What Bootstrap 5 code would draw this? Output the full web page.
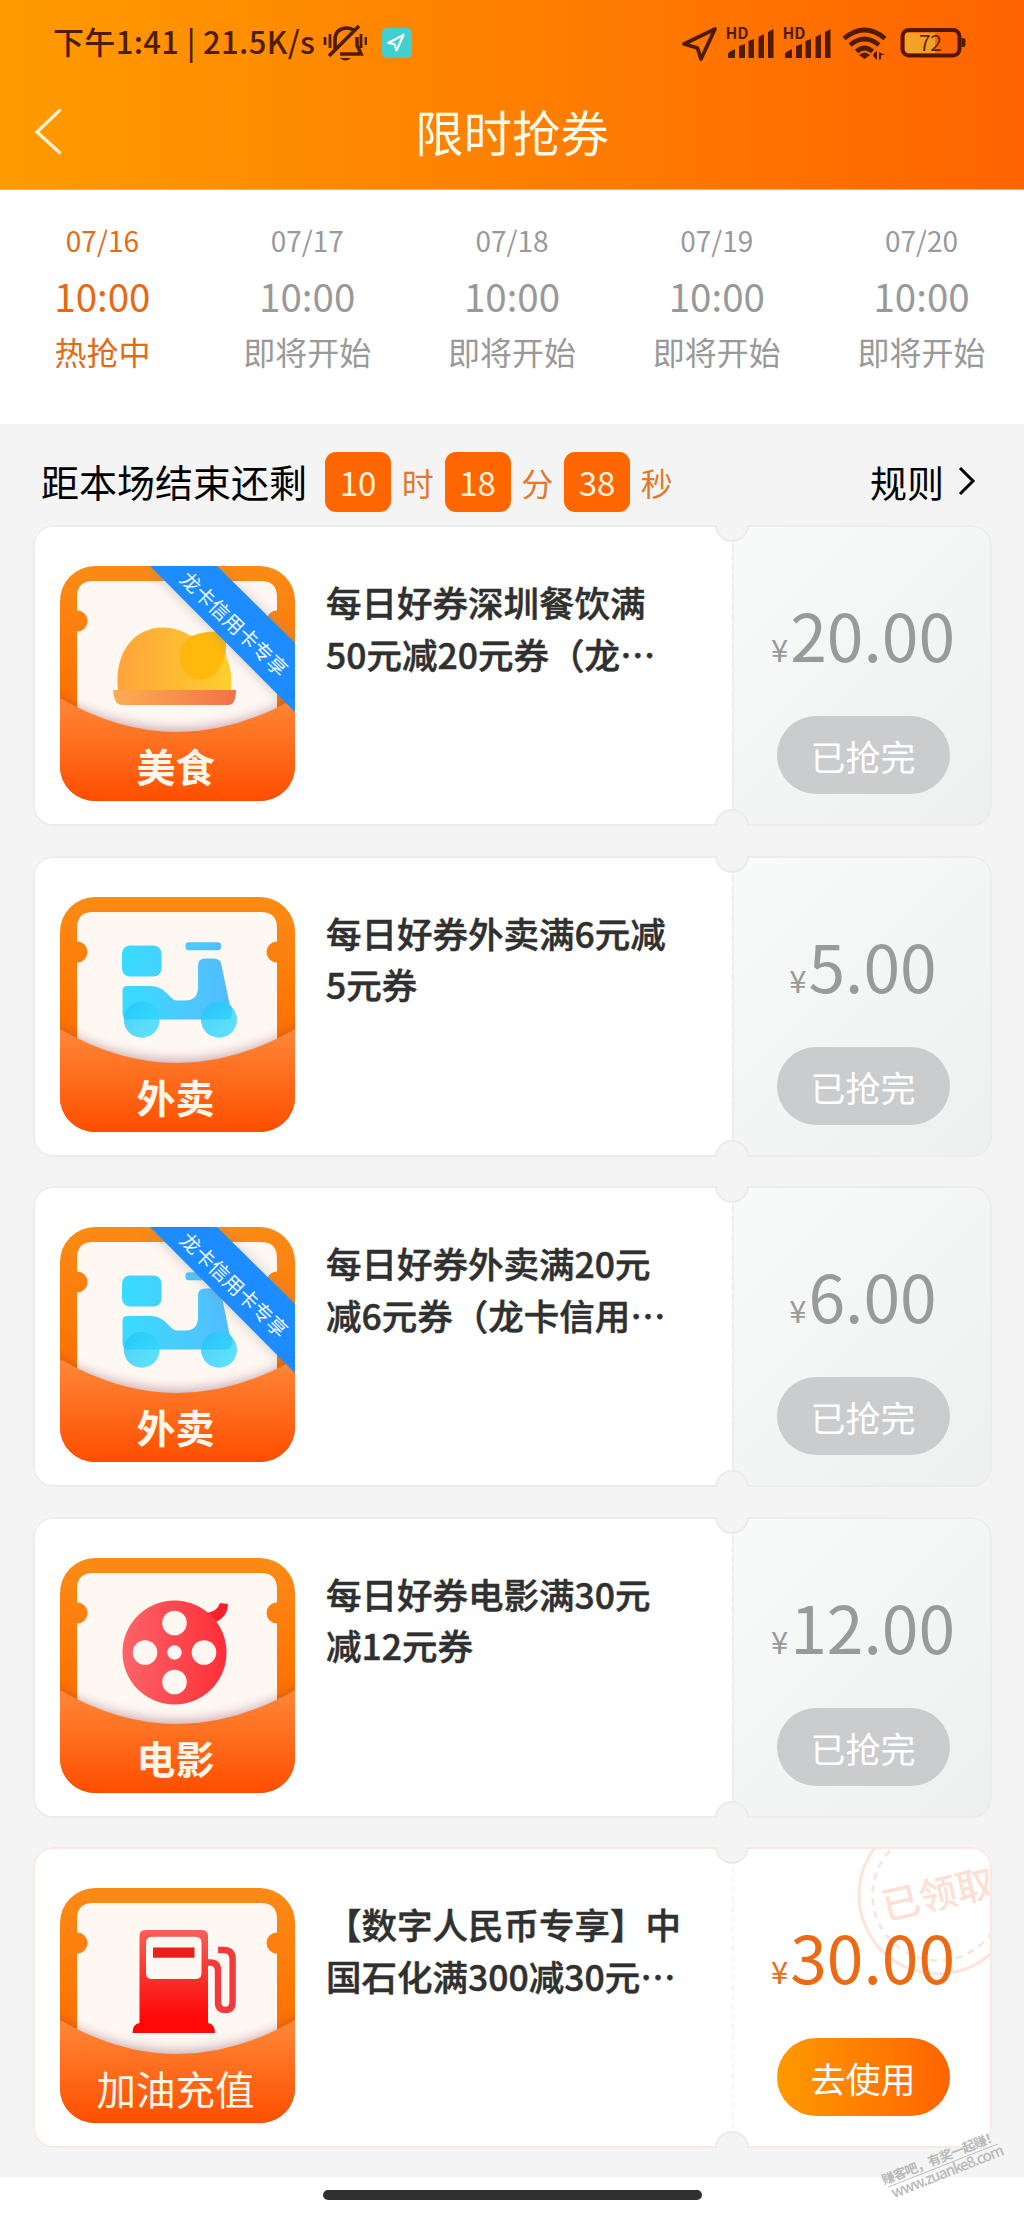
<!DOCTYPE html>
<html lang="zh-CN">
<head>
<meta charset="utf-8">
<meta name="viewport" content="width=device-width, initial-scale=1">
<title>限时抢券</title>
<link href="https://cdn.jsdelivr.net/npm/bootstrap@5.3.0/dist/css/bootstrap.min.css" rel="stylesheet">
<style>
body{font-family:"Noto Sans CJK SC","Noto Sans",sans-serif;background:#fff;width:1024px;color:#000;overflow-x:hidden}
svg{display:block;flex:none}
svg text{font-family:"Noto Sans CJK SC",sans-serif}
.top-area{height:190px;background:linear-gradient(90deg,#ff9b00,#ff6400);border-bottom:1px solid #f3b45e}
.status-row{height:85px;padding:0 58px 0 53px;color:#4f1c00}
.status-text{font-size:31px;font-weight:500;line-height:40px;letter-spacing:.35px;white-space:nowrap;margin-top:-3px}
.title-row{height:92px;color:#fffbe8;padding:0 34px}
.title-row h1{font-size:48.5px;font-weight:400;line-height:60px}
.sessions{height:234px;padding-top:29px;color:#999}
.sessions .on{color:#e66a14}
.s-date{font-size:28px;line-height:43px}
.s-time{font-size:38.5px;line-height:66px}
.s-state{font-size:32px;line-height:46px}
.list-area{background:#f4f4f4;height:1753px;padding:0 32px 0 33px}
.count-row{height:101px;padding:28px 16px 13px 8px}
.count-label{font-size:38px;line-height:58px;width:284px;white-space:nowrap}
.num-box{width:66px;height:60px;border-radius:11px;background:#ff6600;color:#fff3df;font-size:33px;line-height:61px;text-align:center}
.unit{font-size:32px;line-height:61px;color:#e07a30;width:53.5px;text-align:center}
.rules{font-size:37px;line-height:60px}
.coupon{height:301px;margin-bottom:29.6px;border-radius:20px;background:#fff;position:relative;overflow:hidden}
.coupon::before{content:"";position:absolute;inset:0;border:2px solid #ececec;border-radius:20px;z-index:1}
.coupon.live::before{border-color:#fbe8e0}
.notch{position:absolute;left:682px;width:34px;height:34px;border-radius:50%;background:#f4f4f4;border:2px solid #ebebeb;z-index:2}
.notch.up{top:-17px}.notch.down{bottom:-17px}
.main-side{width:699px;padding:41px 0 0 27px}
.c-title{font-size:35.5px;font-weight:500;line-height:51.5px;color:#303030;margin:10px 0 0 31px;white-space:nowrap;-webkit-text-stroke:.5px #303030}
.price-side{flex:1;background:linear-gradient(135deg,#f9fafa,#eef0f0);border-left:2px dashed #ececec;color:#999b9a;position:relative}
.live .price-side{background:none;color:#ec6a14;border-left-color:#f6f6f6}
.price{height:80px;line-height:80px;margin-top:68px;font-size:66px;position:relative;white-space:nowrap}
.price span{font-size:31px;margin-right:2px}
.act{width:173px;height:78px;border-radius:39px;background:#cbccce;color:#fff;font-size:35px;line-height:80px;text-align:center;margin-top:43px;position:relative}
.live .act{background:linear-gradient(90deg,#ff9900,#ff6400)}
.stamp{position:absolute;left:122px;top:-34px}
.foot-bar{height:42px;padding-top:13px}
.foot-bar div{width:379px;height:10px;border-radius:5px;background:#303030}
.wmark{position:absolute;left:873px;top:2117px;z-index:3}
</style>
<script src="https://cdn.jsdelivr.net/npm/bootstrap@5.3.0/dist/js/bootstrap.bundle.min.js"></script>
</head>
<body>
<svg width="0" height="0" class="position-absolute">
<defs>
<linearGradient id="gFrame" x1="0" y1="0" x2="0" y2="1"><stop offset="0" stop-color="#fb8b16"/><stop offset=".6" stop-color="#fe7000"/></linearGradient>
<linearGradient id="gEnv" x1="0" y1="0" x2="0" y2="1"><stop offset="0" stop-color="#ff8838"/><stop offset="1" stop-color="#ff4e00"/></linearGradient>
<linearGradient id="gBike" gradientUnits="userSpaceOnUse" x1="62" y1="0" x2="178" y2="0"><stop offset="0" stop-color="#38dcff"/><stop offset=".7" stop-color="#50c4ff"/><stop offset="1" stop-color="#50b8ff"/></linearGradient>
<linearGradient id="gWheel" x1="0" y1="0" x2="1" y2="1"><stop offset="0" stop-color="#26c4f8"/><stop offset="1" stop-color="#36e0ff"/></linearGradient>
<linearGradient id="gReel" x1="0" y1="0" x2="1" y2="0"><stop offset="0" stop-color="#fb6468"/><stop offset="1" stop-color="#ff2e38"/></linearGradient>
<linearGradient id="gPump" gradientUnits="userSpaceOnUse" x1="0" y1="42" x2="0" y2="145"><stop offset="0" stop-color="#f66058"/><stop offset=".85" stop-color="#ff0808"/></linearGradient>
<linearGradient id="gDome" x1="0" y1="0" x2="1" y2="0"><stop offset="0" stop-color="#ffa43c"/><stop offset="1" stop-color="#ffcf2c"/></linearGradient>
<linearGradient id="gBase" x1="0" y1="0" x2="1" y2="0"><stop offset="0" stop-color="#fbae52"/><stop offset="1" stop-color="#f4714a"/></linearGradient>
<clipPath id="cIcon"><rect width="235" height="235" rx="35"/></clipPath>
<filter id="soft" x="-20%" y="-20%" width="140%" height="140%"><feGaussianBlur stdDeviation="6"/></filter>
<symbol id="frame" viewBox="0 0 235 235">
<g clip-path="url(#cIcon)">
<rect width="235" height="235" fill="url(#gFrame)"/>
<path d="M17 175V65.500a10.500 10.500 0 0 0 0-21V31Q17 15 33 15H201Q217 15 217 31V44.500a10.500 10.500 0 0 0 0 21V175z" fill="#fff7f1"/>
</g></symbol>
<symbol id="pocket" viewBox="0 0 235 235">
<g clip-path="url(#cIcon)">
<path d="M-20 122Q117.500 204 255 122V240H-20z" fill="#6b2a48" opacity=".38" filter="url(#soft)"/>
<path d="M0 132Q117.500 200 235 132V235H0z" fill="url(#gEnv)"/>
</g></symbol>
<symbol id="ribbon" viewBox="0 0 235 235">
<g clip-path="url(#cIcon)">
<path d="M87 0L240 153V80L157 0z" fill="#888" opacity=".35" filter="url(#soft)"/>
<path d="M90 0H157L235 77V146z" fill="#1d8cff"/>
<text transform="translate(174 58) rotate(44)" text-anchor="middle" y="7.500" font-size="20" fill="#f2f7ff">龙卡信用卡专享</text>
</g></symbol>
<symbol id="bike" viewBox="0 0 235 235">
<g fill="url(#gBike)"><rect x="62" y="48.500" width="39.500" height="31" rx="8"/><rect x="125.500" y="45.300" width="35.500" height="8" rx="3"/>
<path d="M62.500 94q0-5 5-5H90C106 89 110 103.500 117 103.500H125Q138 103.500 138 90V68q0-6.500 7-6.500h9q6.500 0 7.500 6.500l8 39q5 5 2 11.500-1 4-6 4H68q-5 0-5.500-6z"/></g>
<g fill="url(#gWheel)" opacity=".8"><circle cx="81.700" cy="122.700" r="18"/><circle cx="159" cy="122.700" r="18"/></g>
</symbol>
</defs>
</svg>

<header class="top-area">
<div class="status-row d-flex align-items-center">
<span class="status-text">下午1:41 | 21.5K/s</span>
<svg class="ms-2" width="44" height="40" viewBox="0 0 44 40" fill="none" stroke="#4f1c00" stroke-width="3.600"><path d="M12 26V17q0-11 11-12 4 0 8 2M34 14v8l4 9H17"/><path d="M36 3L6 33" stroke-width="3.800"/><path d="M2 14v8M7 11v14M38 11v14M43 14v8" stroke-width="2.800"/><path d="M17 35h11q-5.500 5-11 0z" fill="#4f1c00" stroke="none"/></svg>
<svg style="margin-left:15px" width="30" height="30" viewBox="0 0 30 30"><rect width="30" height="30" rx="5" fill="#42cfd2"/><path d="M6 15L21.500 7 14.500 22.500 12.500 16z" fill="none" stroke="#fff" stroke-width="2.200" stroke-linejoin="round"/></svg>
<svg class="ms-auto" width="285" height="44" viewBox="680 20 285 44" fill="#4f1c00">
<path d="M683 43L714 28 700 58 696.500 47z" fill="none" stroke="#4f1c00" stroke-width="3.800" stroke-linejoin="round"/>
<g id="sig"><text x="724.500" y="38" font-size="15.500" font-weight="700" textLength="23" lengthAdjust="spacingAndGlyphs">HD</text><path d="M727 57v-4q0-2 7-5v9zM738 57V45l6-2v14zM747.500 57V40l5.500-2v19zM757.500 57V36l5.500-3v24zM767 57V31l5.500-3v29z"/></g>
<use href="#sig" x="57"/>
<g fill="none" stroke="#4f1c00" stroke-width="4.600"><path d="M843 37.500q20.500-17 41 0M849 44q14.500-12 29 0M855.500 50.500q8-7 16 0"/></g>
<path d="M858 54q5.500-5 11 0l-5.500 4zM873 52l3-2v9l-4-4zM878 51v8l2-1v-4h4z"/>
<rect x="904" y="32" width="30" height="20" fill="#f3a127"/>
<rect x="901.500" y="29" width="57" height="25.500" rx="6.500" fill="none" stroke="#541800" stroke-width="4"/><path d="M960.500 37h1.500q2.500 0 2.500 2.500v4q0 2.500-2.500 2.500h-1.500z"/>
<text x="918" y="50" font-size="21" textLength="23" fill="#642500">72</text>
</svg>
</div>
<div class="title-row position-relative d-flex align-items-center justify-content-center">
<svg class="position-absolute start-0" style="margin-left:33px" width="30" height="48" viewBox="0 0 30 48"><path d="M26.500 3.500L4 25 26.500 45.500" fill="none" stroke="#fff0cf" stroke-width="3.400" stroke-linecap="round"/></svg>
<h1 class="m-0">限时抢券</h1>
</div>
</header>

<nav class="sessions d-flex text-center">
<div class="col on"><div class="s-date">07/16</div><div class="s-time">10:00</div><div class="s-state">热抢中</div></div>
<div class="col"><div class="s-date">07/17</div><div class="s-time">10:00</div><div class="s-state">即将开始</div></div>
<div class="col"><div class="s-date">07/18</div><div class="s-time">10:00</div><div class="s-state">即将开始</div></div>
<div class="col"><div class="s-date">07/19</div><div class="s-time">10:00</div><div class="s-state">即将开始</div></div>
<div class="col"><div class="s-date">07/20</div><div class="s-time">10:00</div><div class="s-state">即将开始</div></div>
</nav>

<main class="list-area">
<div class="count-row d-flex">
<div class="count-label">距本场结束还剩</div>
<div class="num-box">10</div><div class="unit">时</div><div class="num-box">18</div><div class="unit">分</div><div class="num-box">38</div><div class="unit">秒</div>
<div class="rules ms-auto d-flex align-items-center">规则<svg style="margin-left:13px;margin-top:-3px" width="19" height="32" viewBox="0 0 19 32"><path d="M3 3L16 16 3 29" fill="none" stroke="#000" stroke-width="3"/></svg></div>
</div>

<section class="coupon d-flex">
<i class="notch up"></i><i class="notch down"></i>
<div class="main-side d-flex align-items-start">
<svg width="235" height="235" viewBox="0 0 235 235"><use href="#frame"/>
<path d="M58 124C54 85 75 61.500 103 61.500Q118 61.500 131 70L149 66Q166 64 166 76V90Q173 106 171 124z" fill="url(#gDome)"/><path d="M149 66Q167 64 166 77C165 100 155 113.500 142 113.500C128 113.500 120 103 120 90C120 77 130 67 149 66z" fill="#ffb400" opacity=".75"/>
<path d="M53 124H176Q176 139 168 139H62Q54 139 53 124z" fill="url(#gBase)"/>
<use href="#ribbon"/><use href="#pocket"/><path d="M218 129L235 146V132z" fill="#1d8cff"/>
<text x="115.500" y="216" text-anchor="middle" font-size="39" font-weight="700" fill="#fff6ea">美食</text></svg>
<h2 class="c-title">每日好券深圳餐饮满<br>50元减20元券（龙⋯</h2></div>
<div class="price-side d-flex flex-column align-items-center"><div class="price"><span>¥</span>20.00</div><div class="act">已抢完</div></div>
</section>

<section class="coupon d-flex">
<i class="notch up"></i><i class="notch down"></i>
<div class="main-side d-flex align-items-start">
<svg width="235" height="235" viewBox="0 0 235 235"><use href="#frame"/><use href="#bike"/><use href="#pocket"/>
<text x="115.500" y="216" text-anchor="middle" font-size="39" font-weight="700" fill="#fff6ea">外卖</text></svg>
<h2 class="c-title">每日好券外卖满6元减<br>5元券</h2></div>
<div class="price-side d-flex flex-column align-items-center"><div class="price"><span>¥</span>5.00</div><div class="act">已抢完</div></div>
</section>

<section class="coupon d-flex">
<i class="notch up"></i><i class="notch down"></i>
<div class="main-side d-flex align-items-start">
<svg width="235" height="235" viewBox="0 0 235 235"><use href="#frame"/><use href="#bike"/><use href="#ribbon"/><use href="#pocket"/><path d="M218 129L235 146V132z" fill="#1d8cff"/>
<text x="115.500" y="216" text-anchor="middle" font-size="39" font-weight="700" fill="#fff6ea">外卖</text></svg>
<h2 class="c-title">每日好券外卖满20元<br>减6元券（龙卡信用⋯</h2></div>
<div class="price-side d-flex flex-column align-items-center"><div class="price"><span>¥</span>6.00</div><div class="act">已抢完</div></div>
</section>

<section class="coupon d-flex">
<i class="notch up"></i><i class="notch down"></i>
<div class="main-side d-flex align-items-start">
<svg width="235" height="235" viewBox="0 0 235 235"><use href="#frame"/>
<path d="M146 55Q157 54 160 45L168 46Q168 58 156 64z" fill="#f5222c"/><circle cx="114.500" cy="94.500" r="52" fill="url(#gReel)"/>
<g fill="#fff7f1"><circle cx="114.500" cy="65" r="12.300"/><circle cx="85" cy="94.500" r="12.300"/><circle cx="144" cy="94.500" r="12.300"/><circle cx="114.500" cy="124" r="12.300"/><circle cx="114.500" cy="94.500" r="7.200"/></g>
<use href="#pocket"/>
<text x="115.500" y="216" text-anchor="middle" font-size="39" font-weight="700" fill="#fff6ea">电影</text></svg>
<h2 class="c-title">每日好券电影满30元<br>减12元券</h2></div>
<div class="price-side d-flex flex-column align-items-center"><div class="price"><span>¥</span>12.00</div><div class="act">已抢完</div></div>
</section>

<section class="coupon live d-flex mb-0">
<i class="notch up"></i><i class="notch down"></i>
<div class="main-side d-flex align-items-start">
<svg width="235" height="235" viewBox="0 0 235 235"><use href="#frame"/>
<path fill-rule="evenodd" d="M79.500 135V48q0-6 6-6H142q6 0 6 6V135q7 1 7 10H72.500q0-9 7-10zM92 48.700q-6 0-6 6V85q0 6 6 6H135.500q6 0 6-6V54.700q0-6-6-6z" fill="url(#gPump)"/><rect x="93" y="59.500" width="41.500" height="10.200" fill="#e8201c"/>
<path d="M148 74.500h2q8 0 8 8V114q0 8 7.300 8t7.300-8V71q0-9-9-9h-5.500" fill="none" stroke="#f03a3c" stroke-width="6.400"/>
<use href="#pocket"/>
<text x="115.500" y="216.500" text-anchor="middle" font-size="39.500" fill="#fff6ea">加油充值</text></svg>
<h2 class="c-title">【数字人民币专享】中<br>国石化满300减30元⋯</h2></div>
<div class="price-side d-flex flex-column align-items-center">
<svg class="stamp" width="164" height="164" viewBox="-82 -82 164 164"><circle r="79" fill="none" stroke="#fde3d9" stroke-width="3"/><circle r="65.500" fill="none" stroke="#fbe2da" stroke-width="2.500" stroke-dasharray="7 6"/><text transform="rotate(-13)" text-anchor="middle" y="13" font-size="38" font-weight="500" fill="#fde0d5">已领取</text></svg>
<div class="price"><span>¥</span>30.00</div><div class="act">去使用</div></div>
</section>
</main>
<footer class="foot-bar d-flex justify-content-center"><div></div></footer>
<svg class="wmark" width="140" height="90" viewBox="0 0 140 90"><g transform="translate(14 70) rotate(-21.500)" fill="#b9b9b9"><text x="-2" y="-3" font-size="13" font-weight="700" textLength="124">赚客吧，有奖一起赚！</text><path d="M1 0H119v1H1z"/><text x="2" y="13" font-size="15" font-weight="500" textLength="120">www.zuanke8.com</text></g></svg>
</body>
</html>
